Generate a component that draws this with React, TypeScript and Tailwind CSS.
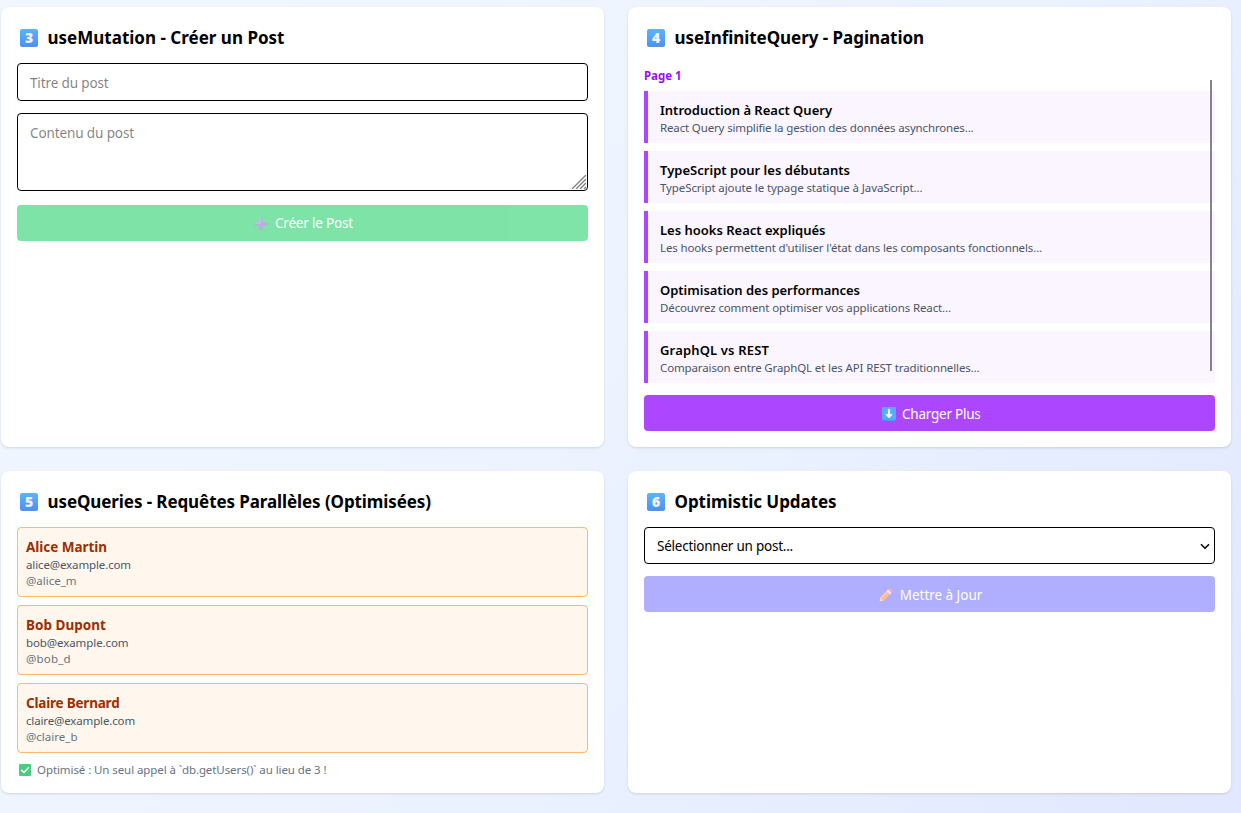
import type { ReactNode } from "react";

const posts = [
  {
    title: "Introduction à React Query",
    titleTracking: "tracking-[-0.001px]",
    text: "React Query simplifie la gestion des données asynchrones...",
    textTracking: "tracking-[-0.15px]",
  },
  {
    title: "TypeScript pour les débutants",
    titleTracking: "tracking-[0.021px]",
    text: "TypeScript ajoute le typage statique à JavaScript...",
    textTracking: "tracking-[-0.091px]",
  },
  {
    title: "Les hooks React expliqués",
    titleTracking: "tracking-[-0.003px]",
    text: "Les hooks permettent d'utiliser l'état dans les composants fonctionnels...",
    textTracking: "tracking-[-0.13px]",
  },
  {
    title: "Optimisation des performances",
    titleTracking: "tracking-[-0.016px]",
    text: "Découvrez comment optimiser vos applications React...",
    textTracking: "tracking-[-0.121px]",
  },
  {
    title: "GraphQL vs REST",
    titleTracking: "tracking-[0.158px]",
    text: "Comparaison entre GraphQL et les API REST traditionnelles...",
    textTracking: "tracking-[-0.132px]",
  },
];

const users = [
  {
    name: "Alice Martin",
    nameTracking: "tracking-[-0.038px]",
    email: "alice@example.com",
    emailTracking: "tracking-[-0.124px]",
    handle: "@alice_m",
    handleTracking: "tracking-[-0.011px]",
  },
  {
    name: "Bob Dupont",
    nameTracking: "tracking-[0.028px]",
    email: "bob@example.com",
    emailTracking: "tracking-[-0.088px]",
    handle: "@bob_d",
    handleTracking: "tracking-[0.18px]",
  },
  {
    name: "Claire Bernard",
    nameTracking: "tracking-[-0.205px]",
    email: "claire@example.com",
    emailTracking: "tracking-[-0.146px]",
    handle: "@claire_b",
    handleTracking: "tracking-[0.008px]",
  },
];

function Keycap({ digit }: { digit: string }) {
  return (
    <span className="flex size-[18px] shrink-0 items-center justify-center rounded-[2px] border-b border-[#5f8fe6] bg-linear-to-b from-[#5cb4fb] to-[#4b93f3] font-['Open_Sans'] text-[14px] leading-none font-extrabold text-[#f3f0fd]">
      {digit}
    </span>
  );
}

function Card({ digit, title, tracking, children }: { digit: string; title: string; tracking: string; children: ReactNode }) {
  return (
    <section className="rounded-lg bg-white p-4 shadow">
      <h2 className={`mb-3 flex h-7 items-center gap-[9.5px] pt-0.5 pl-[3px] text-[17px] font-bold ${tracking}`}>
        <Keycap digit={digit} />
        <span className="-mt-px whitespace-nowrap">{title}</span>
      </h2>
      {children}
    </section>
  );
}

function PlusIcon() {
  return (
    <svg className="size-[14px]" viewBox="0 0 14 14">
      <path d="M5.5 0.5h3v5h5v3h-5v5h-3v-5h-5v-3h5z" fill="#8157d0" />
      <path d="M5.5 0.5h1.500v6.500h-6.500v-1.500h5z" fill="#9773de" />
    </svg>
  );
}

function DownIcon() {
  return (
    <svg className="size-[14px]" viewBox="0 0 14 14">
      <rect width="14" height="14" rx="1.4" fill="#4b96f0" />
      <rect width="14" height="12.8" rx="1.4" fill="#53adfa" />
      <path d="M7 2.8v5.5" fill="none" stroke="#f5f2ff" strokeWidth="2.2" strokeLinecap="round" />
      <path d="M3.8 7.4h6.4L7 11z" fill="#f5f2ff" stroke="#f5f2ff" strokeWidth="0.8" strokeLinejoin="round" />
    </svg>
  );
}

function PencilIcon() {
  return (
    <svg className="size-[14px]" viewBox="0 0 14 14">
      <path d="M0.4 13.6l0.8-4.1 3.300 3.300z" fill="#ffb878" />
      <path d="M0.4 13.6l0.3-1.2 0.9 0.9z" fill="#5b4a5e" />
      <path d="M1.200 9.500l6.400-6.400 3.300 3.300-6.400 6.400z" fill="#ff7d28" />
      <path d="M1.200 9.500l6.400-6.400 1.100 1.100-6.400 6.400z" fill="#ff9548" />
      <path d="M7.600 3.100l1.500-1.500 3.300 3.300-1.500 1.500z" fill="#e6e1f2" />
      <path d="M9.100 1.600l.9-.9c.5-.5 1.200-.5 1.700 0l1.600 1.600c.5.5.5 1.200 0 1.700l-.9.9z" fill="#ff5868" />
    </svg>
  );
}

function CheckIcon() {
  return (
    <svg className="size-3" viewBox="0 0 12 12">
      <rect width="12" height="12" rx="1.200" fill="#4ccb85" />
      <path d="M2.600 6.200l2.300 2.300 4.500-4.700" fill="none" stroke="#fff" strokeWidth="1.500" strokeLinecap="round" strokeLinejoin="round" />
    </svg>
  );
}

export default function App() {
  return (
    <main className="h-screen overflow-hidden bg-[linear-gradient(125deg,#f1f7fe_0%,#edf4ff_45%,#e1e8ff_100%)] pt-[7px] pl-px font-['Noto_Sans',sans-serif] text-black">
      <div className="grid w-[1230px] grid-cols-2 gap-6">
        <Card digit="3" title="useMutation - Créer un Post" tracking="tracking-[0.004px]">
          <input
            className="block h-[38px] w-full rounded border border-black px-3 pt-0.5 text-[13.5px] tracking-[-0.135px]"
            placeholder="Titre du post"
          />
          <div className="relative mt-3">
            <textarea
              className="block h-[78px] w-full resize-none rounded border border-black px-3 pt-[9px] pb-2 text-[13.5px] leading-5 tracking-[-0.113px]"
              placeholder="Contenu du post"
              rows={3}
            />
            <svg className="absolute right-0.5 bottom-0.5 size-[14px]" viewBox="0 0 14 14" stroke="#7d7d7d" strokeWidth="1.300">
              <path d="M0 14L14 0M4 14L14 4M8 14l6-6M12 14l2-2" />
            </svg>
          </div>
          <button className="mt-3.5 flex h-9 w-full items-center justify-center gap-[7px] rounded bg-[#00c950] pt-px pl-0.5 text-[13.5px] tracking-[-0.187px] text-white opacity-50" disabled>
            <PlusIcon />
            Créer le Post
          </button>
        </Card>

        <Card digit="4" title="useInfiniteQuery - Pagination" tracking="tracking-[-0.047px]">
          <div className="relative h-80 overflow-hidden pt-[5px]">
            <p className="mb-[7px] text-[11.5px] leading-4 font-bold tracking-[-0.05px] text-[#9810fa]">Page 1</p>
            <ul className="space-y-2">
              {posts.map((post) => (
                <li key={post.title} className="border-l-4 border-[#ad46ff] bg-[#faf5ff] pt-[9px] pb-[7px] pl-3">
                  <p className={`text-[13px] leading-5 font-semibold ${post.titleTracking}`}>{post.title}</p>
                  <p className={`text-[11.5px] leading-4 text-[#4a5565] ${post.textTracking}`}>{post.text}</p>
                </li>
              ))}
            </ul>
            <div className="absolute top-[17px] right-[3px] h-[291px] w-0.5 bg-[#858585]" />
          </div>
          <button className="mt-3 flex h-9 w-full items-center justify-center gap-[6.5px] rounded bg-[#ad46ff] pt-0.5 pl-[3px] text-[13.5px] tracking-[-0.238px] text-white">
            <DownIcon />
            Charger Plus
          </button>
        </Card>

        <Card digit="5" title="useQueries - Requêtes Parallèles (Optimisées)" tracking="tracking-[-0.091px]">
          <ul className="space-y-2">
            {users.map((user) => (
              <li key={user.handle} className="rounded border border-[#ffb86a] bg-[#fff7ed] px-2 pt-[9px] pb-[7px]">
                <p className={`text-[13.5px] leading-5 font-bold text-[#9f2d00] ${user.nameTracking}`}>{user.name}</p>
                <p className={`text-[11.5px] leading-4 text-[#4a5565] ${user.emailTracking}`}>{user.email}</p>
                <p className={`text-[11.5px] leading-4 text-[#6a7282] ${user.handleTracking}`}>{user.handle}</p>
              </li>
            ))}
          </ul>
          <p className="mt-[9px] -mb-px flex h-4 items-center gap-1.5 pl-0.5 text-[11.5px] leading-4 tracking-[-0.083px] whitespace-nowrap text-[#6a7282]">
            <CheckIcon />
            Optimisé : Un seul appel à `db.getUsers()` au lieu de 3 !
          </p>
        </Card>

        <Card digit="6" title="Optimistic Updates" tracking="tracking-[-0.06px]">
          <div className="relative">
            <select className="block h-[37px] w-full appearance-none rounded border border-black bg-white px-3 pt-px text-[13.5px] tracking-[-0.234px]">
              <option>Sélectionner un post...</option>
            </select>
            <svg className="pointer-events-none absolute top-4 right-[5px] h-[7px] w-2.5" viewBox="0 0 10 7" fill="none" stroke="#000" strokeWidth="1.500">
              <path d="M1 1.200l4 4 4-4" />
            </svg>
          </div>
          <button className="mt-3 flex h-9 w-full items-center justify-center gap-[7px] rounded bg-[#615fff] pt-0.5 pl-0.5 text-[13.5px] tracking-[-0.03px] text-white opacity-50" disabled>
            <PencilIcon />
            Mettre à Jour
          </button>
        </Card>
      </div>
    </main>
  );
}
